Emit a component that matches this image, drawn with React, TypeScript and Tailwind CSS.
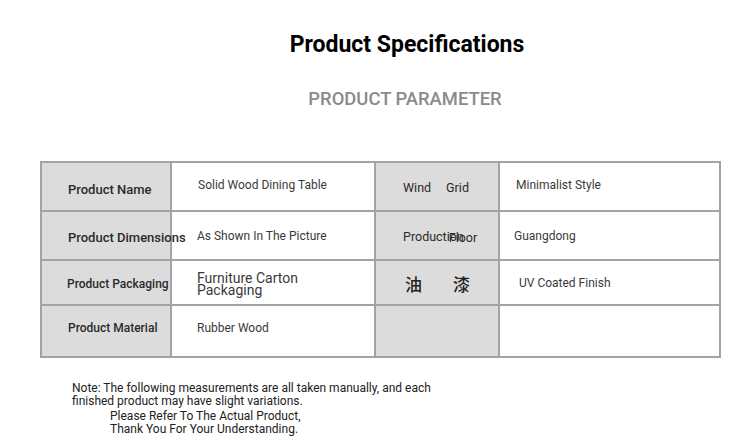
const rows = [
  { label: 'Product Name', value: 'Solid Wood Dining Table', label2: 'wind', value2: 'Minimalist Style', h: 'h-[49px]', lpad: 'pt-[6px] text-[13px]' },
  { label: 'Product Dimensions', value: 'As Shown In The Picture', label2: 'production', value2: 'Guangdong', h: 'h-[49px]', lpad: 'pt-[4px] text-[13px]' },
  { label: 'Product Packaging', value: 'packaging', label2: 'paint', value2: 'UV Coated Finish', h: 'h-[45px]', lpad: 'pt-[3px] text-[12px] -ml-[1px]' },
  { label: 'Product Material', value: 'Rubber Wood', label2: '', value2: '', h: 'h-[52px]', lpad: '-mt-[6px] text-[12px]' },
];

function Label2({ kind }: { kind: string }) {
  if (kind === 'production') {
    return (
      <span className="whitespace-nowrap relative z-10">
        Production<span className="-ml-[15px] relative top-[1px]">Floor</span>
      </span>
    );
  }
  if (kind === 'paint') {
    return (
      <span
        className="whitespace-nowrap pl-[2px] text-[17px] font-medium tracking-[31px] text-[#222]"
        style={{ fontFamily: '"Noto Sans CJK SC", sans-serif' }}
      >
        油漆
      </span>
    );
  }
  if (kind === 'wind') {
    return (
      <span className="whitespace-nowrap">
        Wind<span className="ml-[15px]">Grid</span>
      </span>
    );
  }
  return <span>{kind}</span>;
}

export default function App() {
  return (
    <div className="w-[750px] h-[443px] bg-white overflow-hidden" style={{ fontFamily: 'Roboto, "Liberation Sans", sans-serif' }}>
      {/* Header */}
      <div className="flex flex-col items-center pl-[64px] pt-[30px]">
        <h1 className="text-[23px] font-bold text-black leading-[30px]">Product Specifications</h1>
        <p className="mt-[27px] text-[18.4px] text-[#8a8a8a] font-medium leading-[24px] -ml-[4px]">PRODUCT PARAMETER</p>
      </div>

      {/* Spec table */}
      <div className="ml-[40px] mt-[50px] w-[681px] border-t-2 border-l-2 border-[#a3a3a3] grid grid-cols-[130px_204px_124px_221px]">
        {rows.map((r, i) => (
          <div key={i} className="contents">
            <div className={`${r.h} bg-[#dcdcdc] border-r-2 border-b-2 border-[#a3a3a3] flex items-center pl-[26px] font-medium text-[#2a2a2a] whitespace-nowrap`}>
              <span className={`relative z-10 ${r.lpad}`}>{r.label}</span>
            </div>
            <div className={`${r.h} bg-white border-r-2 border-b-2 border-[#a3a3a3] flex items-center pl-[25px] text-[12px] text-[#3a3a3a]`}>
              {r.value === 'packaging' ? (
                <span className="text-[14px] leading-[12px] text-[#3a3a3a] pt-[2px]">
                  Furniture Carton
                  <br />
                  Packaging
                </span>
              ) : (
                <span className={i === 0 ? 'pl-[1px] -mt-[3px]' : i === 3 ? '-mt-[7px]' : ''}>{r.value}</span>
              )}
            </div>
            <div className={`${r.h} bg-[#dcdcdc] border-r-2 border-b-2 border-[#a3a3a3] flex items-center pl-[27px] pt-[3px] text-[12.5px] text-[#2a2a2a]`}>
              <Label2 kind={r.label2} />
            </div>
            <div className={`${r.h} bg-white border-r-2 border-b-2 border-[#a3a3a3] flex items-center text-[12px] text-[#3a3a3a] ${i === 0 ? 'pl-[16px]' : i === 2 ? 'pl-[19px]' : 'pl-[14px]'}`}>
              <span className={i === 0 ? '-mt-[4px]' : ''}>{r.value2}</span>
            </div>
          </div>
        ))}
      </div>

      {/* Note */}
      <div className="mt-[24px] pl-[72px] text-[12px] leading-[13px] text-[#222]">
        <p>Note: The following measurements are all taken manually, and each</p>
        <p>finished product may have slight variations.</p>
        <p className="pl-[38px] mt-[2px]">Please Refer To The Actual Product,</p>
        <p className="pl-[38px]">Thank You For Your Understanding.</p>
      </div>
    </div>
  );
}
